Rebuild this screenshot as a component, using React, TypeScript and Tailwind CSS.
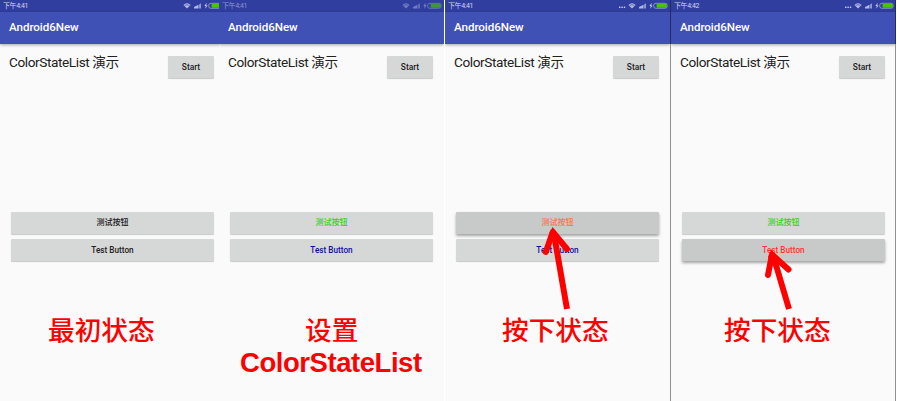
import React from "react";

const roboto = "font-['Roboto','Noto_Sans_CJK_SC',sans-serif]";

function StatusIcons({ dots, dim }: { dots: boolean; dim: boolean }) {
  return (
    <svg width="52" height="12" viewBox="0 0 52 12" className="shrink-0">
      <g fill="#c9cdf0" opacity={dim ? 0.5 : 1}>
        {dots && (
          <>
            <rect x="1" y="6.6" width="1.4" height="1.4" />
            <rect x="3.4" y="6.6" width="1.4" height="1.4" />
            <rect x="5.8" y="6.6" width="1.4" height="1.4" />
          </>
        )}
        <path d="M10.4 5 Q14 1.7 17.6 5 L14 8.6 Z" opacity="0.85" />
        <path d="M11.6 5.6 Q14 3.6 16.4 5.6" fill="none" stroke="#303f9f" strokeWidth="0.6" />
        <path d="M21 8.4 V7 L25.5 4.8 V8.4 Z" opacity="0.85" />
        <path d="M26.1 8.4 V4.5 L28 3.3 V8.4 Z" opacity="0.65" />
        <path d="M33.7 2.8 L31.4 6.1 H32.8 L32.2 8.8 L34.6 5.4 H33.2 Z" />
      </g>
      <g opacity={dim ? 0.65 : 1}>
        <rect x="35.6" y="3.3" width="13.6" height="5" rx="2.3" fill="none" stroke="#a8b0dc" strokeWidth="0.7" />
        <rect x="38.6" y="3.8" width="10" height="4" rx="1" fill="#46c800" />
      </g>
    </svg>
  );
}

type PhoneProps = {
  width: string;
  time: string;
  dots?: boolean;
  dim?: boolean;
  first: string;
  second: string;
  pressed?: 1 | 2;
  children: React.ReactNode;
};

const restShadow = "bg-[#d6d7d7] shadow-[0_1px_1px_rgba(0,0,0,0.2)]";
const pressShadow = "bg-[#c8c9c9] shadow-[0_2px_3px_rgba(0,0,0,0.35)]";

function Phone({ width, time, dots = false, dim = false, first, second, pressed, children }: PhoneProps) {
  return (
    <section className={`relative h-[401px] shrink-0 overflow-hidden bg-[#fafafa] ${width}`}>
      <div className="flex h-[401px] w-[225px] flex-col">
        <div className="flex h-3 shrink-0 items-center justify-between bg-[#303f9f] pl-[3px]">
          <span className={`text-[7px] leading-3 tracking-[-0.4px] ${dim ? "text-[#8b93cb]" : "text-[#d0d4f0]"}`}>{time}</span>
          <StatusIcons dots={dots} dim={dim} />
        </div>
        <header className="flex h-8 shrink-0 items-center bg-[#3f51b5] pl-[9px] text-[11.6px] font-medium tracking-[-0.05px] text-white shadow-[0_1px_3px_rgba(0,0,0,0.35)]">
          Android6New
        </header>
        <div className="flex h-[167px] shrink-0 justify-between pl-[9px] pr-[11px]">
          <h1 className="pt-2 text-[13.6px] leading-[21px] tracking-[-0.4px] text-[#212121]">ColorStateList 演示</h1>
          <button className={`mt-3 h-[22px] w-[46px] rounded-[1px] text-[8.4px] font-medium text-[#212121] ${restShadow}`}>
            Start
          </button>
        </div>
        <div className="flex shrink-0 flex-col gap-[5px] pl-[11px] pt-px">
          <button className={`h-[22px] w-[203px] rounded-[1px] text-[8px] font-medium ${first} ${pressed === 1 ? pressShadow : restShadow}`}>
            测试按钮
          </button>
          <button className={`h-[22px] w-[203px] rounded-[1px] pt-px text-[8.2px] font-medium ${second} ${pressed === 2 ? pressShadow : restShadow}`}>
            Test Button
          </button>
        </div>
        <div className="pt-[55px] font-['Liberation_Sans','Noto_Sans_CJK_SC',sans-serif] text-[26.67px] leading-[31px] text-[#ff0000]">
          {children}
        </div>
      </div>
    </section>
  );
}

export default function App() {
  return (
    <main className={`relative flex h-[401px] w-[897px] overflow-hidden bg-white ${roboto}`}>
      <Phone width="w-[219px]" time="下午4:41" first="text-[#212121]" second="text-[#212121]">
        <p className="pl-[48px] font-medium">最初状态</p>
      </Phone>
      <Phone width="w-[225px]" time="下午4:41" dim first="text-[#36d21a]" second="text-[#10109c]">
        <p className="pl-[86px] font-medium">设置</p>
        <p className="pl-[21px] text-[27.5px] font-bold tracking-[-0.45px]">ColorStateList</p>
      </Phone>
      <div className="w-px shrink-0 bg-white" />
      <Phone width="w-[225px]" time="下午4:41" dots first="text-[#f5784e]" second="text-[#10109c]" pressed={1}>
        <p className="pl-[57px] font-medium">按下状态</p>
      </Phone>
      <div className="h-[401px] w-px shrink-0 bg-[#909090]">
        <div className="h-11 bg-[#222b66]" />
      </div>
      <Phone width="w-[224px]" time="下午4:42" dots first="text-[#36d21a]" second="text-[#ff3333]" pressed={2}>
        <p className="pl-[53px] font-medium">按下状态</p>
      </Phone>
      <div className="h-[401px] w-px shrink-0 bg-[#909090]">
        <div className="h-11 bg-[#222b66]" />
      </div>
      <svg className="pointer-events-none absolute inset-0" width="897" height="401" viewBox="0 0 897 401" fill="none" stroke="#ff0000" strokeWidth="6">
        <path d="M567 309 L555 240" />
        <path d="M545.8 252 L552.8 232 L567 249" strokeLinecap="round" strokeLinejoin="round" />
        <path d="M552.6 227 L549 234 L553.5 244 L558 234 Z" fill="#ff0000" stroke="none" />
        <path d="M789 309 L774.5 260" />
        <path d="M768 275 L772 254.5 L788.5 269.5" strokeLinecap="round" strokeLinejoin="round" />
        <path d="M771.4 249.5 L768 257 L773.5 267 L777 257 Z" fill="#ff0000" stroke="none" />
      </svg>
    </main>
  );
}
